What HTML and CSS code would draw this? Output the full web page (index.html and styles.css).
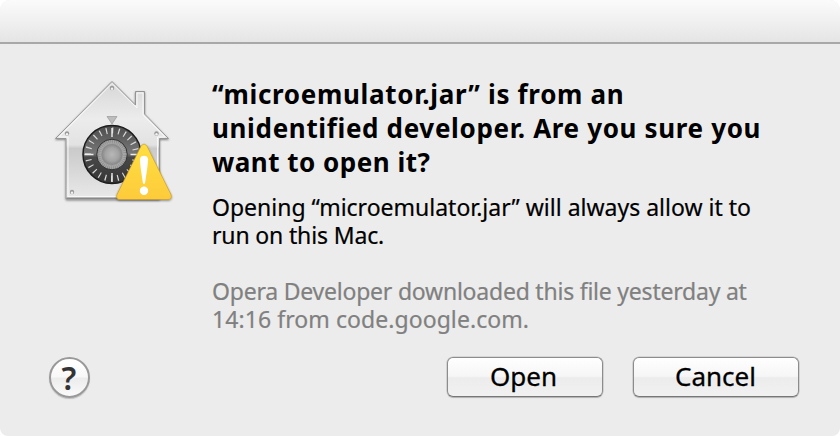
FILE: index.html
```html
<!DOCTYPE html>
<html lang="en">
<head>
<meta charset="utf-8">
<title>Open file</title>
<link rel="stylesheet" href="styles.css">
</head>
<body>
<main class="dialog">
  <header class="titlebar"></header>
  <section class="content">
    <svg class="icon" viewBox="0 0 150 140" width="150" height="140" aria-hidden="true">
      <defs>
        <linearGradient id="house" x1="0" y1="0" x2="0" y2="1">
          <stop offset="0" stop-color="#d6d6d6"/><stop offset=".32" stop-color="#ececec"/>
          <stop offset=".54" stop-color="#e2e2e2"/><stop offset=".57" stop-color="#cacaca"/><stop offset="1" stop-color="#e9e9e9"/>
        </linearGradient>
        <linearGradient id="ring" x1="0" y1="0" x2="0" y2="1">
          <stop offset="0" stop-color="#4c4c4c"/><stop offset=".48" stop-color="#777"/><stop offset=".55" stop-color="#484848"/><stop offset="1" stop-color="#353535"/>
        </linearGradient>
        <radialGradient id="knob"><stop offset="0" stop-color="#b8b8b8"/><stop offset=".65" stop-color="#a2a2a2"/><stop offset="1" stop-color="#858585"/></radialGradient>
        <linearGradient id="warn" x1="0" y1="0" x2="0" y2="1"><stop offset="0" stop-color="#ffdf42"/><stop offset="1" stop-color="#fdcb3a"/></linearGradient>
        <filter id="shade" x="-20%" y="-20%" width="140%" height="140%"><feDropShadow dx="0" dy="1" stdDeviation="1" flood-opacity=".45"/></filter>
      </defs>
      <g filter="url(#shade)">
        <path d="M72 11.500 95.500 35V21.500h9V44l24 24.500h-9V129H26V68.500H15.500Z" fill="url(#house)" stroke="#949494"/>
        <path d="M72 13.500 97 38V23h6V45l22 22h-7.500V126.500H28V67H19Z" fill="none" stroke="#f8f8f8"/>
        <path d="M26.500 128.200H119" stroke="#888" stroke-width="1.500"/>
      </g>
      <g fill="#999"><circle cx="72" cy="18" r="2.200"/><circle cx="27" cy="63.500" r="2.200"/><circle cx="116.500" cy="63.500" r="2.200"/><circle cx="32" cy="122" r="2.200"/></g>
      <g fill="#f2f2f2"><circle cx="72" cy="18.800" r="1.200"/><circle cx="27" cy="64.300" r="1.200"/><circle cx="116.500" cy="64.300" r="1.200"/><circle cx="32" cy="122.800" r="1.200"/></g>
      <path d="M67 46.500H77L72 54Z" fill="#bdbdbd" stroke="#999" stroke-width=".7"/>
      <circle cx="72" cy="84.500" r="29" fill="url(#ring)" stroke="#1c1c1c" stroke-width="1.500"/>
      <circle cx="72" cy="84.500" r="24" fill="none" stroke="#d8d8d8" stroke-width="6" stroke-dasharray="1.200 5.083" stroke-dashoffset=".6"/>
      <path d="M72 58v9M72 103v9M44.500 84.500h9M90.500 84.500h9" stroke="#eee" stroke-width="1.400"/>
      <circle cx="72" cy="84.500" r="15.300" fill="url(#knob)" stroke="#333"/>
      <circle cx="72" cy="84.500" r="12.700" fill="none" stroke="#ccc" stroke-width="3.500" stroke-dasharray=".6 1.300" opacity=".55"/>
      <circle cx="72" cy="84.500" r="10.500" fill="url(#knob)"/>
      <g filter="url(#shade)"><path d="M101.300 75.500Q104 72.500 106.700 75.500L131 124.500Q132.500 129.500 128 129.500H80Q75.500 129.500 77 124.500Z" fill="url(#warn)" stroke="#c1932b" stroke-width=".6"/></g>
      <path d="M100 89C100 84.500 108 84.500 108 89C108 96 106 106 105.200 112.500Q104 115.500 102.800 112.500C102 106 100 96 100 89Z" fill="#fff"/><circle cx="104" cy="120.700" r="4.200" fill="#fff"/>
    </svg>
    <div class="message">
      <h1><span class="h-a">“microemulator.jar” is from an</span><span class="h-b">unidentified developer. Are you sure you</span><span class="h-c">want to open it?</span></h1>
      <p class="info"><span class="i-a">Opening “microemulator.jar” will always allow it to</span><span class="i-b">run on this Mac.</span></p>
      <p class="info origin"><span class="o-a">Opera Developer downloaded this file yesterday at</span><span class="o-b">14:16 from code.google.com.</span></p>
    </div>
  </section>
  <footer class="actions">
    <button class="help" aria-label="Help">?</button>
    <button class="btn open"><span>Open</span></button>
    <button class="btn cancel"><span>Cancel</span></button>
  </footer>
</main>
</body>
</html>
```
FILE: styles.css
```css
* { box-sizing: border-box; }
body { margin: 0; background: #fff; font-family: "Noto Sans", sans-serif; color: #000; }
.dialog { width: 840px; height: 436px; background: #ececec; border-radius: 10px 10px 8px 8px; overflow: hidden; }
.titlebar { height: 44px; background: linear-gradient(#fbfbfb, #e5e5e5); border-bottom: 2px solid #a8a8a8; }
.content { display: flex; height: 313px; padding: 26px 0 0 40px; }
.icon { flex: none; }
.message { padding: 7px 0 0 22px; }
h1, p { margin: 0; }
h1 span, p span { display: block; width: max-content; white-space: nowrap; }
h1 { font-size: 26px; line-height: 34px; font-weight: 700; }
.h-a { letter-spacing: .68px; }
.h-b { letter-spacing: .66px; }
.h-c { letter-spacing: .5px; }
.info { margin-top: 14px; font-size: 23px; line-height: 28px; -webkit-text-stroke: .2px currentColor; }
.i-b { letter-spacing: -.15px; }
.origin { margin-top: 28px; color: #808080; }
.o-a { letter-spacing: -.22px; }
.o-b { letter-spacing: .07px; }
.actions { display: flex; padding-left: 49px; }
button { font-family: inherit; color: #000; padding: 0; }
.help { width: 41px; height: 41px; border: 2px solid #999; border-radius: 50%; background: linear-gradient(#fff 0 5%, #f8f8f8 48%, #ececec 52%, #fafafa); font-size: 32px; line-height: 36px; font-weight: 600; color: #333; padding-right: 1px; box-shadow: 0 1px 1px #0003; }
.btn { height: 40px; border: 1px solid #8c8c8c; border-bottom-color: #777; border-radius: 6px; background: linear-gradient(#fff, #f6f6f6 48%, #ececec 52%, #f1f1f1); font-size: 26px; line-height: 34px; padding-bottom: 2px; box-shadow: 0 0 0 .5px #9998, 0 1px 1px #0003; -webkit-text-stroke: .3px #000; }
.open { width: 156px; margin-left: 357px; padding-right: 3px; }
.cancel { width: 166px; margin-left: 30px; padding-right: 1px; }
```
